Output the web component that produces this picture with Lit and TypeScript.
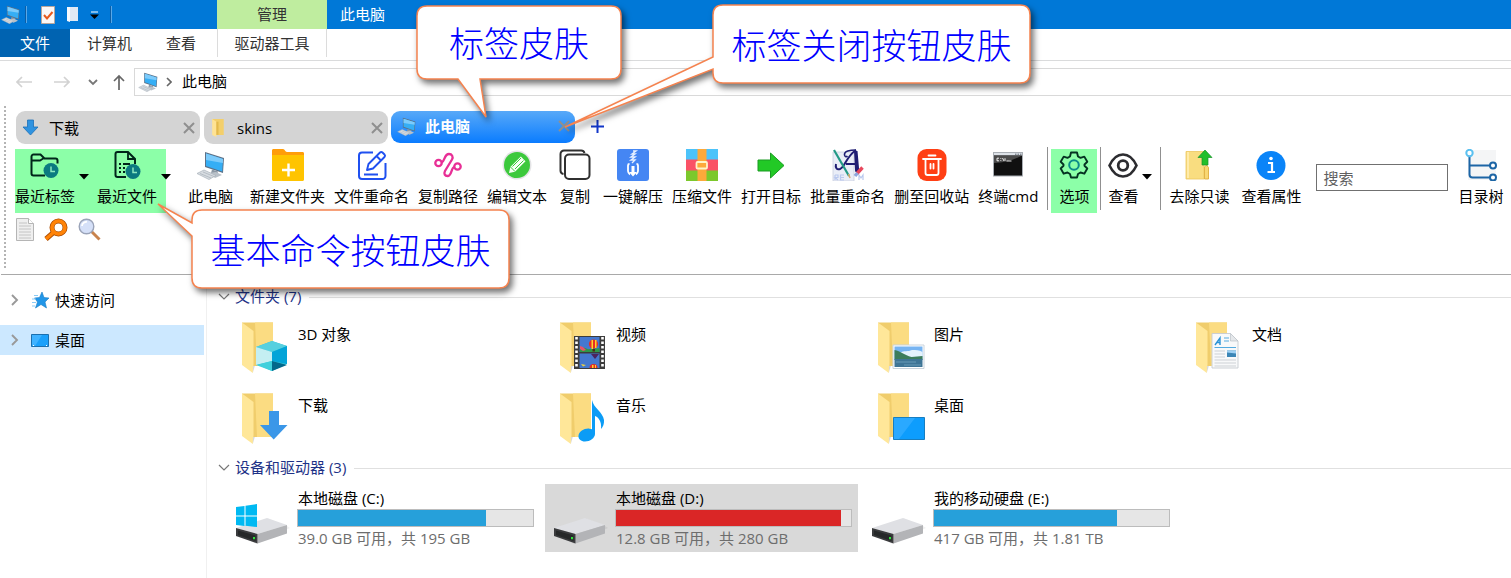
import { LitElement, html, css, svg } from "lit";
import type { TemplateResult } from "lit";
import { customElement, property, state } from "lit/decorators.js";
import { classMap } from "lit/directives/class-map.js";

type Art = TemplateResult;

const icon = (w: number, h: number, body: Art, box = `0 0 ${w} ${h}`) =>
  html`<svg width=${w} height=${h} viewBox=${box} aria-hidden="true" fill="none">${body}</svg>`;

const pcArt = svg`
  <path d="M9 1 28 7 27 22 9 16Z" fill="#5d7187"/>
  <path d="M10 2.500 27 8 26.200 20.500 10 15Z" fill="#35aef5"/>
  <path d="M10 2.500 27 8 26.900 12 10 9Z" fill="#7ccbfb"/>
  <path d="M16 18.500 22 20.500 21 24 15 22Z" fill="#8c98a4"/>
  <path d="M13 22 20 21 26 24 19 27Z" fill="#b9c1c9"/>
  <path d="M1 22.500 8 19 20 24.500 13 28.500Z" fill="#d7dce1" stroke="#a9b2ba" stroke-width=".7"/>
  <path d="M4 22.500 15 27M7 21 18 25.500" stroke="#a6afb8" stroke-width=".7"/>`;
const pc = (s: number) => icon(s, s, pcArt, "0 0 29 29");

const downArt = svg`<path d="M5 1h6v7h4.500L8 16 .500 8H5Z" fill="#2f93e0" stroke="#1c70b8" stroke-width=".8"/>`;

const smallFolder = (w: number, h: number) => icon(w, h, svg`
  <path d="M1 1h11v15H4Z" fill="#f3cf6b"/>
  <path d="M1 1 5 3.500V18L1 16Z" fill="#ffe394"/>
  <path d="M5 3.500h2V16H5Z" fill="#e3b94d"/>`, "0 0 14 18");

const green = "#00251a";
const teal = "#0b7a80";
const clock = (x: number, y: number, r: number) => svg`
  <circle cx=${x} cy=${y} r=${r} fill=${teal}/>
  <path d=${`M${x} ${y - 4}v5h4`} stroke="#8ce8c0" stroke-width="1.500"/>`;

const toolArt: Record<string, Art> = {
  tabs: icon(32, 32, svg`
    <path d="M16 26.500H4.500a2 2 0 0 1-2-2v-17a2 2 0 0 1 2-2h7l4 4h11a2 2 0 0 1 2 2v3" stroke=${green} stroke-width="2"/>
    <path d="M3 11.500h8l4-2.500" stroke=${green} stroke-width="1.800"/>${clock(22, 21.500, 7.500)}`),
  files: icon(32, 32, svg`
    <path d="M15 28H6.500a2 2 0 0 1-2-2V5a2 2 0 0 1 2-2H17l7 7v5" stroke=${green} stroke-width="2"/>
    <path d="M17 3v7h7" stroke=${green} stroke-width="1.800"/>
    <path d="M8 15h2m2 0h7M8 19h2m2 0h2M8 23h2m2 0h2" stroke=${green} stroke-width="2"/>${clock(22, 22.500, 7.500)}`),
  pc: pc(29),
  newFolder: icon(32, 32, svg`
    <path d="M0 3V1.500C0 .700.600 0 1.500 0H11c2 0 2 3 4 3h15.500c1 0 1.500.600 1.500 1.500V8H0Z" fill="#ff9d0a"/>
    <path d="M0 6h32v24.500c0 .900-.600 1.500-1.500 1.500h-29C.600 32 0 31.400 0 30.500Z" fill="#ffc400"/>
    <path d="M16.500 14.500v13M10 21h13" stroke="#fff" stroke-width="2.400"/>`),
  rename: icon(32, 32, svg`
    <path d="M17 3.500H6a3 3 0 0 0-3 3V27a3 3 0 0 0 3 3h20.500a3 3 0 0 0 3-3V14M8 25.500h14" stroke="#1f50f0" stroke-width="2"/>
    <path d="m11 21 1.500-6L24 3.500a1.800 1.800 0 0 1 2.500 0l2 2a1.800 1.800 0 0 1 0 2.500L17 19.500Zm9.500-14 4.500 4.500" stroke="#1f50f0" stroke-width="1.900" stroke-linejoin="round"/>`),
  path: icon(32, 32, svg`
    <g stroke="#e82f96" stroke-width="2.300">
    <circle cx="6.500" cy="14" r="3.200"/><circle cx="25.500" cy="17.500" r="3.200"/>
    <path d="M9.700 13.500c3.300-1 2.300-8.500 7.300-8.500 3 0 4.500 3 3 5.500l-7 11.500c-1.500 3 0 5 2.500 5 4.500 0 3.300-8 6.800-9"/></g>`),
  edit: icon(32, 32, svg`
    <circle cx="16" cy="16" r="14.500" fill="#e4e4e6"/><circle cx="16" cy="16" r="13" fill="#3cc93c"/>
    <path d="m8 24 1.300-6L19.800 7.600l4.700 4.700L14 22.700Z" fill="#f6fff4"/>
    <path d="m11.500 17.500 8.500-8.500m-6 11 8.500-8.500M9.500 18l4.500 4.500" stroke="#3cc93c" stroke-width="1"/>`),
  copy: icon(32, 32, svg`
    <path d="M4.500 25A3.500 3.500 0 0 1 1.500 21.500V5A3.500 3.500 0 0 1 5 1.500h17A3.500 3.500 0 0 1 25.500 4" stroke="#303030" stroke-width="2"/>
    <rect x="6" y="5.500" width="24.500" height="24.500" rx="4" stroke="#303030" stroke-width="2" fill="#fff"/>`),
  unzip: icon(32, 32, svg`
    <rect width="32" height="32" rx="3" fill="#4586f3"/>
    <path d="M16 2h3l-4 3h3l-4 3h4l-4 3h4l-3 3" stroke="#e6f0ff" stroke-width="1.400"/>
    <path d="M12.500 15c-1 0-1.500.500-1.500 1.500V22a4.500 4.500 0 0 0 2 3.500M19.500 15c1 0 1.500.500 1.500 1.500V22a4.500 4.500 0 0 1-2 3.500" stroke="#fff" stroke-width="1.800"/>
    <path d="M14.500 17h3v6H20l-4 4.500-4-4.500h2.500Z" fill="#fff"/>`),
  zip: icon(32, 32, svg`
    <path d="M0 0h32v11H0Z" fill="#4cc3fa"/><path d="M0 10.500h32V22H0Z" fill="#fa5266"/><path d="M0 21.500h32V32H0Z" fill="#7cc82c"/>
    <path d="M11.500 0h9v32h-9Z" fill="#fda93a"/><rect x="10.500" y="13" width="10.500" height="6.500" rx="1" fill="#fda93a" stroke="#fff3c8" stroke-width="1.800"/>`),
  target: icon(32, 32, svg`<path d="M3 11h12.500V4L29 16.500 15.500 29v-7H3Z" fill="#22c926" stroke="#1a9b22" stroke-width="1"/>`),
  batch: icon(32, 32, svg`
    <path d="M1 3h21v29H1Z" fill="#e9edf7" stroke="#c9cfdf" stroke-width=".8"/>
    <path d="M3 26v5M3 26h3v2.500H3l3 2.500M12 26H8.500v5H12M8.500 28.500H12M27 31v-5l2 3 2-3v5" stroke="#b9c8ee" stroke-width="1.200"/>
    <path d="M24 1C18 1 12 2 12.500 6c.300 2 2 2 3 1" stroke="#1f1d73" stroke-width="1.600"/>
    <path d="M4 15c-1 4 1 6 4 5 5-2 6-12 16-19M14 15h11" stroke="#1f1d73" stroke-width="2"/>
    <path d="M22 2h3.500l1.500 17c.300 2 1.500 2.500 3 1.500l-2 2.500c-3 1.500-5 .500-5-2Z" fill="#1f1d73"/>
    <path d="M2 1 17 27" stroke="#239a86" stroke-width="2.200"/><path d="m16.500 25 1.500 4" stroke="#d9a86c" stroke-width="1.500"/>
    <path d="m25 24.500 5.500-6" stroke="#e8475c" stroke-width="3.400"/><path d="m23 27 2.500-3" stroke="#8da6dd" stroke-width="3.400"/>`),
  trash: icon(32, 32, svg`
    <rect x="1.500" width="29" height="32" rx="9" fill="#ff3f14"/>
    <path d="M7 10h18M12.500 6.500h7M9.500 10v14a2 2 0 0 0 2 2h9a2 2 0 0 0 2-2V10M14.500 15v4.500m3-4.500v4.500" stroke="#fff" stroke-width="1.800" stroke-linecap="round"/>`),
  cmd: icon(32, 32, svg`
    <rect x="1.500" y="3.500" width="29" height="23.500" fill="#101010" stroke="#a9aeb4"/>
    <path d="M2 4h28v2.500H2Z" fill="#dde2e8"/><path d="M23 5.200h1.500m1 0H27m1 0h1.500" stroke="#5a6470"/>
    <path d="M2 14C12 14 22 11 30 6.500H2Z" fill="#4b4b4b"/>
    <path d="M7 9.200H5v2.600h2M8.800 9.200v.800m0 1v.800M10.500 9l1.500 3m1-2.800v2.600M14.500 12h5" stroke="#fff" stroke-width=".9"/>`),
  gear: icon(32, 32, svg`
    <path d="M13 3.500h6l1 4 2.500 1.300 3.800-1.200 3 5.200-2.800 2.700v1.300l2.800 2.700-3 5.200-3.800-1.200L20 25l-1 3.500h-6L12 25l-2.500-1.500-3.800 1.200-3-5.200 2.800-2.700v-1.300l-2.800-2.700 3-5.200 3.800 1.200L12 7.500Z" stroke="#053222" stroke-width="1.900" stroke-linejoin="round"/>
    <circle cx="16" cy="16" r="4.800" stroke="#0d8a8a" stroke-width="2"/>`),
  eye: icon(30, 32, svg`
    <path d="M1.500 16.500C5 9 10 5.500 15 5.500S25 9 28.500 16.500C25 24 20 27.500 15 27.500S5 24 1.500 16.500Z" stroke="#2c2c30" stroke-width="2.600"/>
    <circle cx="15" cy="16.500" r="4.800" stroke="#2c2c30" stroke-width="2.800"/>`),
  readonly: icon(32, 32, svg`
    <path d="M3 2.500h18V30H3Z" fill="#f9dd80" stroke="#ecc65e" stroke-width=".8"/><path d="M4 3h2v26H4Z" fill="#ffebaa"/>
    <path d="M21.500 18 23.500 16l2 2.500V30h-4Z" fill="#f8d773" stroke="#dfae3d" stroke-width=".9"/>
    <path d="M22 1 29 8.500h-4V16h-6V8.500h-4Z" fill="#22bf2a" stroke="#17932a" stroke-width=".7"/>`),
  info: icon(32, 32, svg`
    <circle cx="16" cy="16.500" r="14.500" fill="#0a84f8"/><circle cx="16" cy="9.500" r="1.800" fill="#fff"/>
    <path d="M13 14h4v9m-4.500 0h7.500" stroke="#fff" stroke-width="2.200"/>`),
  tree: icon(32, 32, svg`
    <path d="M3 1h28v30H3Z" fill="#f4f5f6"/>
    <path d="M4.500 7v18.500a3 3 0 0 0 3 3H25M4.500 16.500H25" stroke="#1c65a5" stroke-width="2"/>
    <circle cx="4.500" cy="4" r="3.200" fill="#fff" stroke="#5ac0f0" stroke-width="2"/>
    <circle cx="28" cy="16.500" r="3" fill="#fff" stroke="#1c65a5" stroke-width="2"/><circle cx="28" cy="28.500" r="3" fill="#fff" stroke="#1c65a5" stroke-width="2"/>`),
};

const overlays: Record<string, Art> = {
  cube: svg`
    <path d="m21 28 16-6 15 5v18l-15 7-16-7Z" fill="#35c4d6"/>
    <path d="m21 28 16-6 15 5-15 6Z" fill="#57d0df"/><path d="m21 28 16 5v9l-16 4Z" fill="#c4eff2"/>
    <path d="m37 33 15-6v18l-15-3Z" fill="#03a4d8"/><path d="m21 46 16-4v10Z" fill="#3ed0dc"/><path d="m37 42 15 4-15 6Z" fill="#03688c"/>`,
  film: svg`
    <path d="M21 17h31v33H21Z" fill="#3c3c3c"/><path d="M23.500 18v31M49.500 18v31" stroke="#fff" stroke-width="2.600" stroke-dasharray="2.500 2"/>
    <path d="M26.500 18h20v15h-20ZM26.500 34.500h20V49h-20Z" fill="#4478cf"/>
    <path d="M27 29c4-2 7 2 10 1s6 0 9.500-1v4H27Z" fill="#2f9846"/><path d="m27 27 3 1 3 3-3 1-3-2Z" fill="#e8526a"/>
    <circle cx="40.500" cy="25" r="4.600" fill="#e62d26"/><path d="M38.500 21h1.500v9h-1.500ZM42 21h1.500v8H42Z" fill="#ffd42b"/><path d="M39.500 30h2.500v2.500h-2.500Z" fill="#4b2b16"/>
    <path d="m38 35 4 5 4-5Z" fill="#4b235d"/><path d="M36.500 49a4 4 0 0 1 8 0Z" fill="#e62d26"/><path d="M39 46h1.500v3H39Zm3 0h1v3h-1Z" fill="#ffd42b"/><path d="m28 45 5 1-3 1.500Z" fill="#f2d33c"/>`,
  picture: svg`<g transform="translate(1)">
    <path d="M21 26h31v23.500H21Z" fill="#fff" stroke="#c9d3dc"/>
    <path d="M22.500 27.500h28v13h-28Z" fill="#76b4f2"/><path d="M28 34c4-3 8-1 12-3 4 0 7 0 10.500 2v6H28Z" fill="#e4f2fc"/>
    <path d="M22.500 31c6 1 10 5 17 7l11-1v4h-28Z" fill="#3d7d5c"/><path d="M22.500 40h28v8h-28Z" fill="#3f7596"/><path d="M24 43h20m-12 3h17" stroke="#73a6c0" stroke-width=".8"/></g>`,
  document: svg`<g transform="translate(1)">
    <path d="M22 14.500h18.500l7.500 7.500v27H22Z" fill="#f8f9fa" stroke="#c6cbd0" stroke-width=".9"/><path d="M40.500 14.500V22H48Z" fill="#e5e8eb" stroke="#bcc2c7" stroke-width=".7"/>
    <path d="m25 26 5-7v7m-3.500-2.500H30" stroke="#2a93d6" stroke-width="1.400"/><path d="M34 19h5m-5 3h5M24.500 28.500H46" stroke="#54abe0"/>
    <path d="M37 31.500h9V38h-9Z" fill="#3c86b6"/><path d="M37 31.500h9v3l-9-1Z" fill="#9fd1f4"/>
    <path d="M24.500 32H35m-10.500 3H35m-10.500 3H35m-10.500 3H46m-21.500 3H46m-21.500 3H46" stroke="#cdd1d5"/></g>`,
  download: svg`<path d="M34 21h10v14h8.500L38.700 49.500 25 35h9Z" fill="#3b97e8"/>`,
  music: svg`
    <path d="M39 10c1.500 8 11 12 12 20 .300 4-1 7-3 9 1-8-3-12-6-13v18c0 4-5 7.500-10 7.500-4 0-7-2.500-6.500-6 .700-4 6-7.500 11-6.800.900 0 1.700.300 2.500.600Z" fill="#0b9cf6"/>`,
  desktop: svg`<g transform="translate(1)">
    <path d="M21.500 27.500h31v22h-31Z" fill="#0d9dfd" stroke="#187ec0"/><path d="M22 28h21L27 49h-5Z" fill="#2aa9ff"/></g>`,
};

const folder = (kind: string) => icon(56, 56, svg`
  <path d="M7 3.500h31V47H14Z" fill="#f0cd6c"/><path d="M20 3.500h18V47H22Z" fill="#fbdc82"/>
  <path d="M7 3.500 18.500 12v33l-.700 9L7 46Z" fill="#ffe799"/><path d="m17.800 54 2-7H18Z" fill="#d9d9d9"/>
  ${overlays[kind]}`);

const drive = (win: boolean) => icon(56, 56, svg`
  <path d="m1 40 32-11.500L52 36l3 2-34 16Z" fill="#000" opacity=".06"/>
  <path d="M1 38 32 28l20 7-29.500 9Z" fill="#dfe0e4"/>
  <path d="M22.500 44 52 35v8.500L22.500 53.500Z" fill="#b3b4b7"/>
  <path d="M1 38 22.500 44v9.500L1 46Z" fill="#3a3b3d"/>
  <path d="m3 40.500 17.500 5V51L3 45Z" fill="#262829"/><path d="M18 47h2v2.200h-2Z" fill="#2fe03a"/>
  ${win ? svg`<path d="m1 17 8.500-1v9.500H1Zm9.500-1.200L22 14v11.500H10.500ZM1 26.500h8.500V36L1 35Zm9.500 0H22V37l-11.500-1.200Z" fill="#00b9f2"/>` : null}`);

const chevronRight = icon(8, 12, svg`<path d="m1 1 5 5-5 5" stroke="#999" stroke-width="1.900"/>`);
const chevronDown = icon(12, 8, svg`<path d="m1 1 5 5 5-5" stroke="#777" stroke-width="1.200"/>`);
const closeX = icon(12, 12, svg`<path d="m1 1 10 10M11 1 1 11" stroke="#8f8f8f" stroke-width="2"/>`);
const caret = html`<svg class="caret" width="10" height="6" viewBox="0 0 10 6" aria-hidden="true"><path d="M0 0h10L5 5.500Z" fill="#000"/></svg>`;

/** A speech bubble whose outline, tail included, is one path. */
@customElement("app-callout")
export class AppCallout extends LitElement {
  static styles = css`
    :host { position: absolute; display: block; z-index: 2; pointer-events: none; }
    .bubble { display: grid; place-items: center; }
    .shape { grid-area: 1 / 1; overflow: visible; filter: drop-shadow(3px 4px 3px rgb(0 0 0 / 55%)); }
    .outline { fill: #fff; stroke: #f5834f; stroke-width: 1.500; }
    .text { grid-area: 1 / 1; position: relative; padding-top: 3px; font-size: 35px; line-height: 48px; font-weight: 300; color: #00f; white-space: nowrap; }
  `;
  @property({ type: Number }) w = 0;
  @property({ type: Number }) h = 0;
  @property() outline = "";
  @property() text = "";

  render() {
    return html`<div class="bubble">
      <svg class="shape" width=${this.w} height=${this.h} aria-hidden="true"><path class="outline" d=${this.outline}></path></svg>
      <span class="text">${this.text}</span>
    </div>`;
  }
}

interface Tool { art: string; label: string; kind?: string }
const commands: Tool[] = [
  { art: "pc", label: "此电脑", kind: "spaced" },
  { art: "newFolder", label: "新建文件夹" },
  { art: "rename", label: "文件重命名" },
  { art: "path", label: "复制路径" },
  { art: "edit", label: "编辑文本" },
  { art: "copy", label: "复制" },
  { art: "unzip", label: "一键解压" },
  { art: "zip", label: "压缩文件" },
  { art: "target", label: "打开目标" },
  { art: "batch", label: "批量重命名" },
  { art: "trash", label: "删至回收站" },
  { art: "cmd", label: "终端cmd" },
];

const folders = [
  ["cube", "3D 对象"], ["film", "视频"], ["picture", "图片"], ["document", "文档"],
  ["download", "下载"], ["music", "音乐"], ["desktop", "桌面"],
];

const drives = [
  { name: "本地磁盘 (C:)", used: 80, info: "39.0 GB 可用，共 195 GB", win: true },
  { name: "本地磁盘 (D:)", used: 95.6, info: "12.8 GB 可用，共 280 GB", full: true },
  { name: "我的移动硬盘 (E:)", used: 78, info: "417 GB 可用，共 1.81 TB" },
];

@customElement("app-root")
export class AppRoot extends LitElement {
  static styles = css`
    :host {
      display: block; position: relative; min-height: 100vh; overflow: hidden; background: #fff; color: #000;
      font-family: "Open Sans", "Noto Sans CJK SC", sans-serif; font-size: 15px; line-height: 20px;
    }
    * { box-sizing: border-box; }
    svg { display: block; flex: none; }
    button { font: inherit; color: inherit; background: none; border: 0; padding: 0; white-space: nowrap; }

    .titlebar { display: flex; height: 29px; background: #0078d7; color: #fff; }
    .quick { width: 217px; display: flex; align-items: center; padding-left: 1px; gap: 5px; }
    .quick-sep { width: 2px; height: 17px; background: #0b5ea6; border-right: 1px solid #59a8e8; }
    .quick-check { margin: 0 6px 0 9px; }
    .quick-more { margin: 0 6px; }
    .context { width: 110px; background: #bfed9f; color: #333; display: grid; place-items: center; padding-bottom: 2px; }
    .title { margin: 0; padding-left: 13px; font-size: 15px; line-height: 29px; font-weight: 400; }

    .ribbon { display: flex; height: 32px; padding-bottom: 3px; border-bottom: 1px solid #dadbdc; color: #333; }
    .ribbon button { padding: 0 17px; line-height: 28px; }
    .ribbon .file { width: 70px; background: #0063b1; color: #fff; }
    .ribbon .drive-tools { margin-left: 4px; width: 110px; padding: 0; border: solid #dcdcdc; border-width: 0 1px; }

    .address { display: flex; align-items: center; padding: 7px 0 9px 16px; height: 44px; }
    .nav { display: flex; align-items: center; gap: 22px; width: 118px; }
    .nav .up { margin-left: -7px; }
    .nav .recent { margin-left: -4px; }
    .crumbs { flex: 1; display: flex; align-items: center; gap: 8px; height: 28px; border: 1px solid #d9d9d9; border-right: 0; padding-left: 3px; }
    .crumbs button { margin-left: 2px; padding-bottom: 2px; }

    .toolbar { margin-left: 1px; padding: 6px 0 32px 3px; border-bottom: 1px solid #a9a9a9; }
    .toolbar-body { display: grid; gap: 5px; padding-left: 10px; position: relative; }
    .toolbar-body::before {
      content: ""; position: absolute; left: 0; top: -5px; bottom: -28px; width: 2px;
      background: repeating-linear-gradient(#b4b4b4 0 2px, transparent 2px 4px);
    }
    .tabs { display: flex; align-items: flex-start; gap: 4px; padding-left: 2px; }
    .tab { display: flex; align-items: center; width: 184px; height: 33px; padding: 0 5px 0 6px; background: #d4d4d4; border-radius: 9px; }
    .tab-name { flex: 1; display: flex; align-items: center; gap: 10px; }
    .tab.active { height: 32px; margin-left: -1px; padding-bottom: 2px; color: #fff; font-weight: 700; background: linear-gradient(#58a9f8, #0a7cff); }
    .active .tab-name { gap: 9px; }
    .add { margin: 9px 0 0 12px; }

    .tools { display: flex; align-items: flex-start; height: 64px; }
    .tool { display: flex; flex-direction: column; align-items: center; gap: 5px; height: 64px; min-width: 47px; padding: 0 4px 0 5px; }
    .tool .pic { display: grid; place-items: center; height: 32px; }
    .split { display: flex; align-items: center; gap: 4px; }
    .split .tool { padding: 0; min-width: 0; }
    .caret { margin-top: -8px; }
    .recents { display: flex; gap: 8px; width: 151px; margin: 0 9px 0 1px; background: #8cffa8; }
    .tool.spaced { padding: 0 12px 0 13px; }
    .tool.lit { padding: 0 7px; min-width: 46px; background: #8cffa8; }
    .view { padding: 0 5px 0 4px; }
    .tool.props { margin-left: 3px; }
    .sep { width: 1px; height: 63px; margin: -2px 3px 0; background: #909090; }
    .sep.first { margin-left: 5px; }
    .search { width: 132px; height: 27px; margin: 15px 5px 0 11px; padding: 0 6px; border: 1px solid #707070; border-radius: 0; font: inherit; background: #fff; }
    .search::placeholder { color: #606060; opacity: 1; }
    .minor { display: flex; gap: 10px; align-items: center; padding-left: 2px; height: 23px; margin-bottom: 1px; }

    .body { display: flex; align-items: flex-start; }
    .side { width: 206px; padding: 10px 2px 0 0; display: flex; flex-direction: column; gap: 10px; }
    .side button { display: flex; align-items: center; height: 30px; padding-left: 11px; }
    .side button.on { background: #cce8ff; }
    .side .pic { width: 36px; padding-left: 12px; }
    .main { flex: 1; min-height: 303px; padding: 6px 0 0 11px; border-left: 1px solid #f0f0f0; }
    .group-head { display: flex; align-items: center; gap: 5px; height: 32px; color: #1e3287; }
    .group-head h2 { margin: 0; padding-bottom: 2px; font-size: 15px; font-weight: 400; line-height: 20px; }
    .group-head hr { flex: 1; margin: 0 0 0 3px; border: 0; border-top: 1px solid #e0e0e0; }
    .grid { display: grid; grid-template-columns: repeat(auto-fill, 313px); gap: 3px 5px; padding-left: 9px; }
    .tile { display: flex; height: 68px; padding: 6px 6px 0 8px; gap: 6px; text-align: left; }
    .tile.chosen { background: #d9d9d9; }
    .tile .name { padding: 5px 0 0 1px; }
    .drive { flex: 1; display: grid; gap: 1px; margin-top: -2px; align-content: start; }
    .drive span { padding-left: 1px; }
    .drive .info { color: #6d6d6d; }
    .gauge { appearance: none; display: block; width: 100%; height: 18px; border: 1px solid #bcbcbc; background: #e6e6e6; }
    .gauge::-webkit-progress-bar { background: #e6e6e6; }
    .gauge::-webkit-progress-value { background: #26a0da; }
    .gauge.full::-webkit-progress-value { background: #da2626; }

    .note-tab { left: 417px; top: 6px; }
    .note-close { left: 713px; top: 5px; }
    .note-command { left: 192px; top: 210px; }
  `;

  @state() private activeTab = 2;

  private tool(t: Tool) {
    return html`<button class="tool ${t.kind ?? ""}"><span class="pic">${toolArt[t.art]}</span><span>${t.label}</span></button>`;
  }

  private tab(i: number, art: Art, name: string) {
    return html`<div class=${classMap({ tab: true, active: this.activeTab === i })}>
      <button class="tab-name" @click=${() => (this.activeTab = i)}>${art}<span>${name}</span></button>
      <button aria-label="关闭">${closeX}</button>
    </div>`;
  }

  private head(text: string) {
    return html`<div class="group-head">${chevronDown}<h2>${text}</h2><hr /></div>`;
  }

  render() {
    return html`
      <header>
        <div class="titlebar">
          <div class="quick">
            ${pc(19)}
            <span class="quick-sep"></span>
            <span class="quick-check">${icon(14, 18, svg`<path d="M.500.500h13v17H.500Z" fill="#faf8f7" stroke="#b9a79d"/><path d="m3 9 3 3.500L11.500 6" stroke="#e85a1c" stroke-width="2"/>`)}</span>
            ${icon(13, 17, svg`<path d="M1 1h11v14H3Z" fill="#dfe9f5"/><path d="M1 1h3v15l-3-1Z" fill="#f6f9fd"/>`)}
            <span class="quick-more">${icon(9, 8, svg`<path d="M1 1h7" stroke="#fff"/><path d="M0 3.500h9L4.500 8Z" fill="#000"/>`)}</span>
            <span class="quick-sep"></span>
          </div>
          <div class="context">管理</div>
          <h1 class="title">此电脑</h1>
        </div>
        <nav class="ribbon">
          <button class="file">文件</button>
          <button>计算机</button>
          <button>查看</button>
          <button class="drive-tools">驱动器工具</button>
        </nav>
        <div class="address">
          <div class="nav">
            <button aria-label="后退">${icon(16, 12, svg`<path d="M16 6H1.500M6 1 1 6l5 5" stroke="#d2d2d2" stroke-width="1.700"/>`)}</button>
            <button aria-label="前进">${icon(16, 12, svg`<path d="M0 6h14.500M10 1l5 5-5 5" stroke="#d2d2d2" stroke-width="1.700"/>`)}</button>
            <button class="recent" aria-label="最近位置">${icon(10, 7, svg`<path d="m1 1 4 4 4-4" stroke="#777" stroke-width="1.800"/>`)}</button>
            <button class="up" aria-label="向上">${icon(12, 16, svg`<path d="M6 16V2M1 7l5-5 5 5" stroke="#666" stroke-width="1.700"/>`)}</button>
          </div>
          <div class="crumbs">
            ${pc(20)}
            ${icon(6, 10, svg`<path d="m1 1 4 4-4 4" stroke="#666" stroke-width="1.600"/>`)}
            <button>此电脑</button>
          </div>
        </div>
      </header>

      <section class="toolbar">
        <div class="toolbar-body">
          <div class="tabs">
            ${this.tab(0, icon(17, 17, downArt, "0 0 16 17"), "下载")}
            ${this.tab(1, smallFolder(17, 19), "skins")}
            ${this.tab(2, pc(19), "此电脑")}
            <button class="add" aria-label="新标签">${icon(13, 13, svg`<path d="M6.500 0v13M0 6.500h13" stroke="#1237c9" stroke-width="2"/>`)}</button>
          </div>
          <div class="tools">
            <div class="recents">
              <div class="split">${this.tool({ art: "tabs", label: "最近标签" })}${caret}</div>
              <div class="split">${this.tool({ art: "files", label: "最近文件" })}${caret}</div>
            </div>
            ${commands.map((c) => this.tool(c))}
            <span class="sep first"></span>
            ${this.tool({ art: "gear", label: "选项", kind: "lit" })}
            <span class="sep"></span>
            <div class="split view">${this.tool({ art: "eye", label: "查看" })}${caret}</div>
            <span class="sep"></span>
            ${this.tool({ art: "readonly", label: "去除只读" })}
            ${this.tool({ art: "info", label: "查看属性", kind: "props" })}
            <input class="search" type="text" placeholder="搜索" aria-label="搜索" />
            ${this.tool({ art: "tree", label: "目录树" })}
          </div>
          <div class="minor">
            <button aria-label="文本">${icon(18, 23, svg`<path d="M.500.500h12l5 5v17H.500Z" fill="#efefef" stroke="#b5b5b5"/><path d="M12.500.500v5h5" fill="#fff" stroke="#b5b5b5"/><path d="M3 5h8M3 8h12M3 11h12M3 14h12M3 17h12M3 20h12" stroke="#c4c4c4"/>`)}</button>
            <button aria-label="查找">${icon(24, 24, svg`<path d="m2 21 8-7" stroke="#a84a00" stroke-width="5"/><circle cx="14.500" cy="9.500" r="6.500" stroke="#a84a00" stroke-width="5"/><path d="m2 21 8-7" stroke="#ff8307" stroke-width="3.500"/><circle cx="14.500" cy="9.500" r="6.500" stroke="#ff8307" stroke-width="3.600"/>`)}</button>
            <button aria-label="搜索文件">${icon(24, 24, svg`<path d="m13.500 13.500 8 8" stroke="#c8834d" stroke-width="3"/><circle cx="8.500" cy="8.500" r="7.300" fill="#d5e0f8" stroke="#9aa3b8" stroke-width="1.400"/><path d="M4 8c0-3 3-4.500 5-4" stroke="#fff" stroke-width="1.800"/>`)}</button>
          </div>
        </div>
      </section>

      <div class="body">
        <nav class="side">
          <button>${chevronRight}<span class="pic">${icon(19, 18, svg`<path d="m11 1 2 5.500 5 .500-4 4 1.500 6L10 13.500 4.500 17l2-6-3-4 5-.500Z" fill="#2196e8" stroke="#1a7cc4" stroke-width=".6"/><path d="M3 4.500h4M1 8h4M1 11.500h4M1 15h3" stroke="#8ccbf5"/>`)}</span>快速访问</button>
          <button class="on">${chevronRight}<span class="pic">${icon(18, 13, svg`<path d="M.500.500h17v12H.500Z" fill="#1aa0fb" stroke="#1b6fae"/><path d="M1 1h10L4 12H1Z" fill="#3fb2ff"/><path d="M2 11.500h1m12 0h1" stroke="#fff"/>`)}</span>桌面</button>
        </nav>
        <main class="main">
          ${this.head("文件夹 (7)")}
          <div class="grid">
            ${folders.map(([kind, name]) => html`<button class="tile">${folder(kind)}<span class="name">${name}</span></button>`)}
          </div>
          ${this.head("设备和驱动器 (3)")}
          <div class="grid">
            ${drives.map((d) => html`<button class=${classMap({ tile: true, chosen: !!d.full })}>
              ${drive(!!d.win)}
              <span class="drive">
                <span>${d.name}</span>
                <progress class=${classMap({ gauge: true, full: !!d.full })} max="100" value=${d.used} aria-label=${d.name}></progress>
                <span class="info">${d.info}</span>
              </span>
            </button>`)}
          </div>
        </main>
      </div>

      <app-callout class="note-tab" w="204" h="73" text="标签皮肤"
        outline="M10 0H194Q204 0 204 10V63Q204 73 194 73H63L69 111 41 73H10Q0 73 0 63V10Q0 0 10 0Z"></app-callout>
      <app-callout class="note-close" w="317" h="78" text="标签关闭按钮皮肤"
        outline="M10 0H307Q317 0 317 10V68Q317 78 307 78H10Q0 78 0 68V64L-148 122 0 52V10Q0 0 10 0Z"></app-callout>
      <app-callout class="note-command" w="317" h="78" text="基本命令按钮皮肤"
        outline="M10 0H307Q317 0 317 10V68Q317 78 307 78H10Q0 78 0 68V26L-34 -6 0 13V10Q0 0 10 0Z"></app-callout>
    `;
  }
}
